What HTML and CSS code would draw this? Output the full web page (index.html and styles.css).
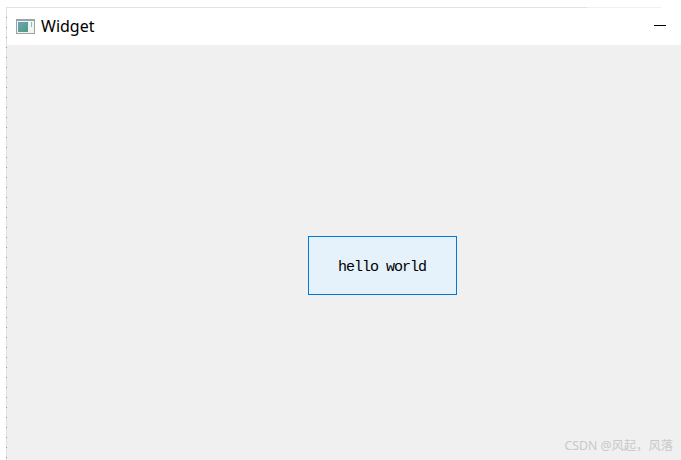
FILE: index.html
```html
<!DOCTYPE html>
<html lang="en">
<head>
  <meta charset="UTF-8" />
  <title>Widget</title>
  <link rel="stylesheet" href="styles.css">
</head>
<body>
  <div class="top-line"><div class="top-line-dark"></div></div>
  <div class="window">
    <div class="titlebar">
      <svg class="app-icon" width="19" height="15" viewBox="0 0 19 15">
        <defs>
          <linearGradient id="pane" x1="0" y1="0" x2="1" y2="1">
            <stop offset="0" stop-color="#6fa3bd" />
            <stop offset="1" stop-color="#4f9a7c" />
          </linearGradient>
        </defs>
        <rect x="0" y="0" width="19" height="15" fill="#9aa2a8" />
        <rect x="1" y="2" width="17" height="12" fill="#f1f4f4" />
        <rect x="2" y="3" width="10" height="10" fill="url(#pane)" />
        <rect x="15" y="3" width="1" height="5" fill="#8fc0b8" />
      </svg>
      <span class="title">Widget</span>
      <div class="minimize"></div>
    </div>
    <div class="content">
      <div class="hello-btn"><span class="hello-text">hello world</span></div>
    </div>
  </div>
  <div class="watermark">CSDN @风起，风落</div>
</body>
</html>
```

FILE: styles.css
```css
html, body {
  height: 100%;
}
body {
  margin: 0;
  background-color: #fff;
  overflow: hidden;
  display: flex;
  flex-direction: column;
}
.top-line {
  margin: 7px 20px 0 6px;
  height: 1px;
  background-color: #f0f0f0;
}
.top-line-dark {
  width: 581px;
  height: 1px;
  background-color: #e2e2e2;
}
.window {
  flex: 1;
  margin-left: 6px;
  padding-left: 1px;
  display: flex;
  flex-direction: column;
  background-color: #e0e0e0;
  background-image: repeating-linear-gradient(to bottom, transparent 0, transparent 9px, #999 9px, #999 10px);
  background-size: 1px 100%;
  background-repeat: no-repeat;
}
.titlebar {
  height: 37px;
  flex-shrink: 0;
  display: flex;
  align-items: center;
  background-color: #fff;
  padding: 0 15px 0 9px;
}
.app-icon {
  margin-right: 6px;
}
.title {
  font-family: "Noto Sans", Arial, sans-serif;
  font-size: 16px;
  color: #000;
  margin-bottom: 2px;
}
.minimize {
  margin-left: auto;
  width: 12px;
  height: 1px;
  background-color: #000;
  margin-bottom: 3px;
}
.content {
  flex: 1;
  background-color: #f0f0f0;
  padding: 191px 0 0 301px;
}
.hello-btn {
  width: 147px;
  height: 57px;
  border: 1px solid #0078d7;
  background-color: #e5f1fb;
  display: flex;
  align-items: center;
  justify-content: center;
  color: #000;
}
.hello-text {
  font-family: "Liberation Mono", monospace;
  font-size: 15px;
  letter-spacing: -1px;
  margin-top: 3px;
  margin-right: 1px;
}
.watermark {
  position: absolute;
  right: 8px;
  top: 436px;
  font-family: "Noto Sans", "Noto Sans CJK SC", sans-serif;
  font-size: 12.3px;
  color: #c9c9c9;
}
```
